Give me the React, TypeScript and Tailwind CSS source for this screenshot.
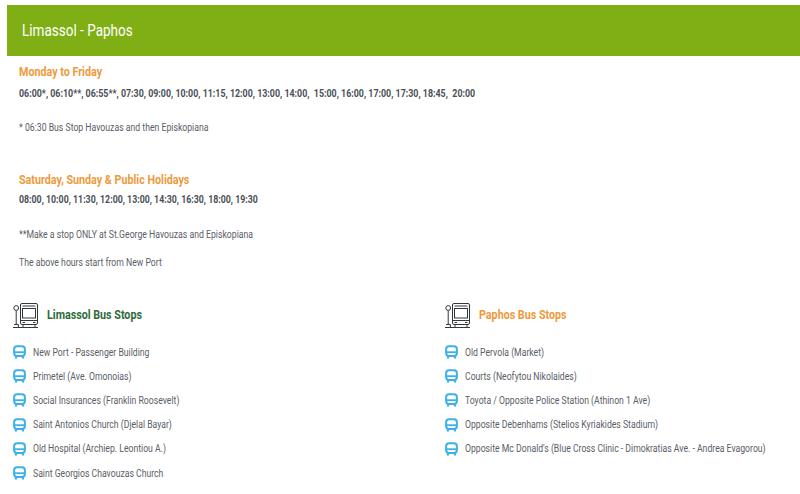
const limassolStops = [
  "New Port - Passenger Building",
  "Primetel (Ave. Omonoias)",
  "Social Insurances (Franklin Roosevelt)",
  "Saint Antonios Church (Djelal Bayar)",
  "Old Hospital (Archiep. Leontiou A.)",
  "Saint Georgios Chavouzas Church",
];

const paphosStops = [
  "Old Pervola (Market)",
  "Courts (Neofytou Nikolaides)",
  "Toyota / Opposite Police Station (Athinon 1 Ave)",
  "Opposite Debenhams (Stelios Kyriakides Stadium)",
  "Opposite Mc Donald's (Blue Cross Clinic - Dimokratias Ave. - Andrea Evagorou)",
];

function BusStopIcon() {
  return (
    <svg width="25" height="25" viewBox="0 0 25 25" fill="none" stroke="#33383c" strokeWidth="1" className="shrink-0">
      <circle cx="3.2" cy="5" r="2.4" />
      <path d="M3.2 7.5V21M1 21.5h4.4v3M0 24.5h25" />
      <rect x="7.5" y="0.5" width="17" height="21" rx="1.5" />
      <rect x="9.5" y="5.5" width="13" height="9.5" />
      <path d="M9.5 3h13M7.5 17.5h17M9.5 19.5h2.5M20 19.5h2.5M10 21.5v3M22 21.5v3" />
    </svg>
  );
}

function BusIcon() {
  return (
    <svg width="13" height="14" viewBox="0 0 13 14" fill="none" className="shrink-0">
      <rect x="1.1" y="1.2" width="10.8" height="9.8" rx="3" stroke="#3db1e6" strokeWidth="2" />
      <path d="M1.1 7.2h10.8" stroke="#3db1e6" strokeWidth="1.8" />
      <path d="M3 11v2.4M10 11v2.4" stroke="#3db1e6" strokeWidth="2.2" />
    </svg>
  );
}

function StopColumn({ title, titleClass, stops }: { title: string; titleClass: string; stops: string[] }) {
  return (
    <div className="w-[432px] shrink-0 pl-[13px]">
      <div className="flex h-[26px] items-center gap-[9px]">
        <BusStopIcon />
        <h3 className={`origin-left scale-x-[0.825] text-[13px] font-bold whitespace-nowrap ${titleClass}`}>{title}</h3>
      </div>
      <ul className="mt-[12px] flex flex-col">
        {stops.map((s) => (
          <li key={s} className="flex h-[24.2px] items-center gap-[7px] text-[10px] text-[#5a6068]">
            <BusIcon />
            <span className="origin-left scale-x-[0.866] whitespace-nowrap">{s}</span>
          </li>
        ))}
      </ul>
    </div>
  );
}

export default function App() {
  return (
    <div className="h-[494px] w-[800px] overflow-hidden bg-white pt-[5px] font-['Roboto',sans-serif]">
      <div className="ml-[7px] flex h-[51px] items-center bg-[#80ae15] pl-[15px] text-white">
        <span className="origin-left scale-x-[0.845] text-[16px]">Limassol - Paphos</span>
      </div>

      <div className="pl-[19px] text-[#4a4f57]">
        <h3 className="mt-[9px] origin-left scale-x-[0.825] text-[13px] leading-[14px] font-bold text-[#ee9a3c]">
          Monday to Friday
        </h3>
        <p className="mt-[9px] origin-left scale-x-[0.845] text-[10.5px] leading-[12px] font-bold whitespace-pre">
          06:00*, 06:10**, 06:55**, 07:30, 09:00, 10:00, 11:15, 12:00, 13:00, 14:00,  15:00, 16:00, 17:00, 17:30, 18:45,  20:00
        </p>
        <p className="mt-[22px] origin-left scale-x-[0.868] text-[10px] leading-[12px] text-[#5a6068]">
          * 06:30 Bus Stop Havouzas and then Episkopiana
        </p>

        <h3 className="mt-[39px] origin-left scale-x-[0.825] text-[13px] leading-[14px] font-bold text-[#ee9a3c]">
          Saturday, Sunday &amp; Public Holidays
        </h3>
        <p className="mt-[7px] origin-left scale-x-[0.838] text-[10.5px] leading-[12px] font-bold">
          08:00, 10:00, 11:30, 12:00, 13:00, 14:30, 16:30, 18:00, 19:30
        </p>
        <p className="mt-[23px] origin-left scale-x-[0.868] text-[10px] leading-[12px] text-[#5a6068]">
          **Make a stop ONLY at St.George Havouzas and Episkopiana
        </p>
        <p className="mt-[16px] origin-left scale-x-[0.868] text-[10px] leading-[12px] text-[#5a6068]">
          The above hours start from New Port
        </p>
      </div>

      <div className="mt-[33px] flex">
        <StopColumn title="Limassol Bus Stops" titleClass="text-[#2f6b3a]" stops={limassolStops} />
        <StopColumn title="Paphos Bus Stops" titleClass="text-[#ee9a3c]" stops={paphosStops} />
      </div>
    </div>
  );
}
